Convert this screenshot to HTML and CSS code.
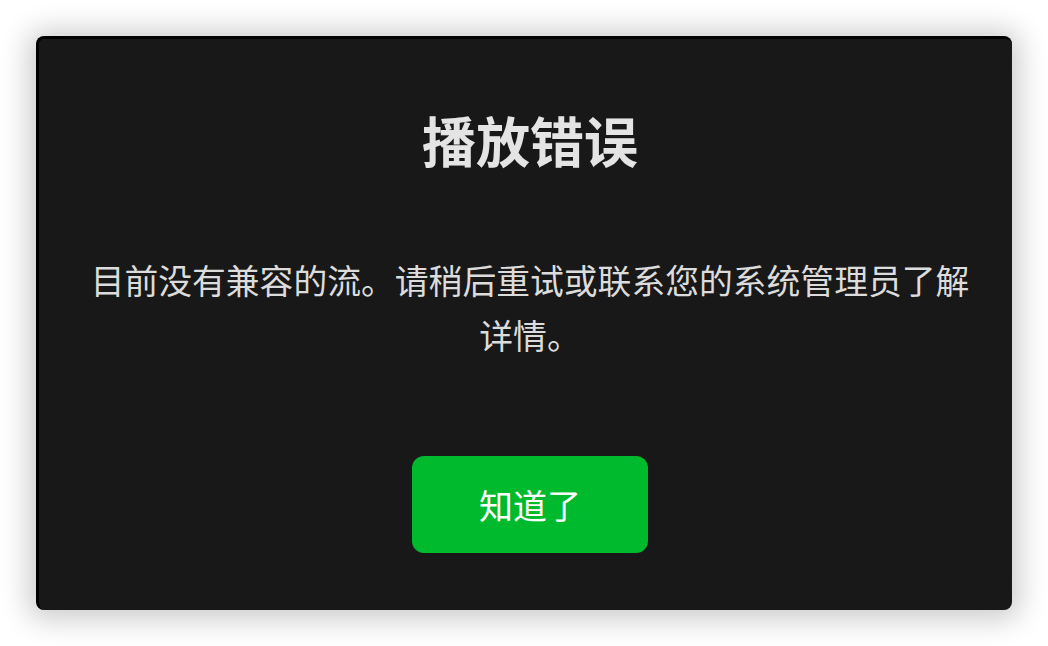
FILE: index.html
```html
<!DOCTYPE html>
<html lang="zh-CN">
<head>
<meta charset="utf-8">
<title>播放错误</title>
<link rel="stylesheet" href="styles.css">
</head>
<body>
<div class="dialog">
  <h1 class="title">播放错误</h1>
  <p class="message">目前没有兼容的流。请稍后重试或联系您的系统管理员了解详情。</p>
  <button class="ok">知道了</button>
</div>
</body>
</html>
```

FILE: styles.css
```css
html, body {
  margin: 0;
  padding: 0;
  background: #ffffff;
}
body {
  width: 1048px;
  height: 646px;
  overflow: hidden;
  font-family: "Noto Sans CJK SC", "Noto Sans", sans-serif;
}
.dialog {
  box-sizing: border-box;
  margin: 36px 0 0 36px;
  width: 976px;
  height: 574px;
  background: #181818;
  border-top: 3px solid #000;
  border-left: 3px solid #000;
  border-radius: 8px;
  box-shadow: 0 2px 28px 8px rgba(0, 0, 0, 0.2);
  padding: 69px 36px 57px 45px;
  display: flex;
  flex-direction: column;
  align-items: center;
}
.title {
  margin: 0;
  font-size: 54px;
  line-height: 64px;
  font-weight: 700;
  color: #e4e4e4;
  text-align: center;
}
.message {
  margin: 80px 0 0 0;
  font-size: 33.8px;
  line-height: 55px;
  color: #dcdcdc;
  text-align: center;
}
.ok {
  margin-top: 94px;
  width: 236px;
  height: 97px;
  border: none;
  border-radius: 12px;
  background: #00ba2e;
  color: #ffffff;
  font-family: inherit;
  font-size: 34px;
  padding: 0;
}
```
